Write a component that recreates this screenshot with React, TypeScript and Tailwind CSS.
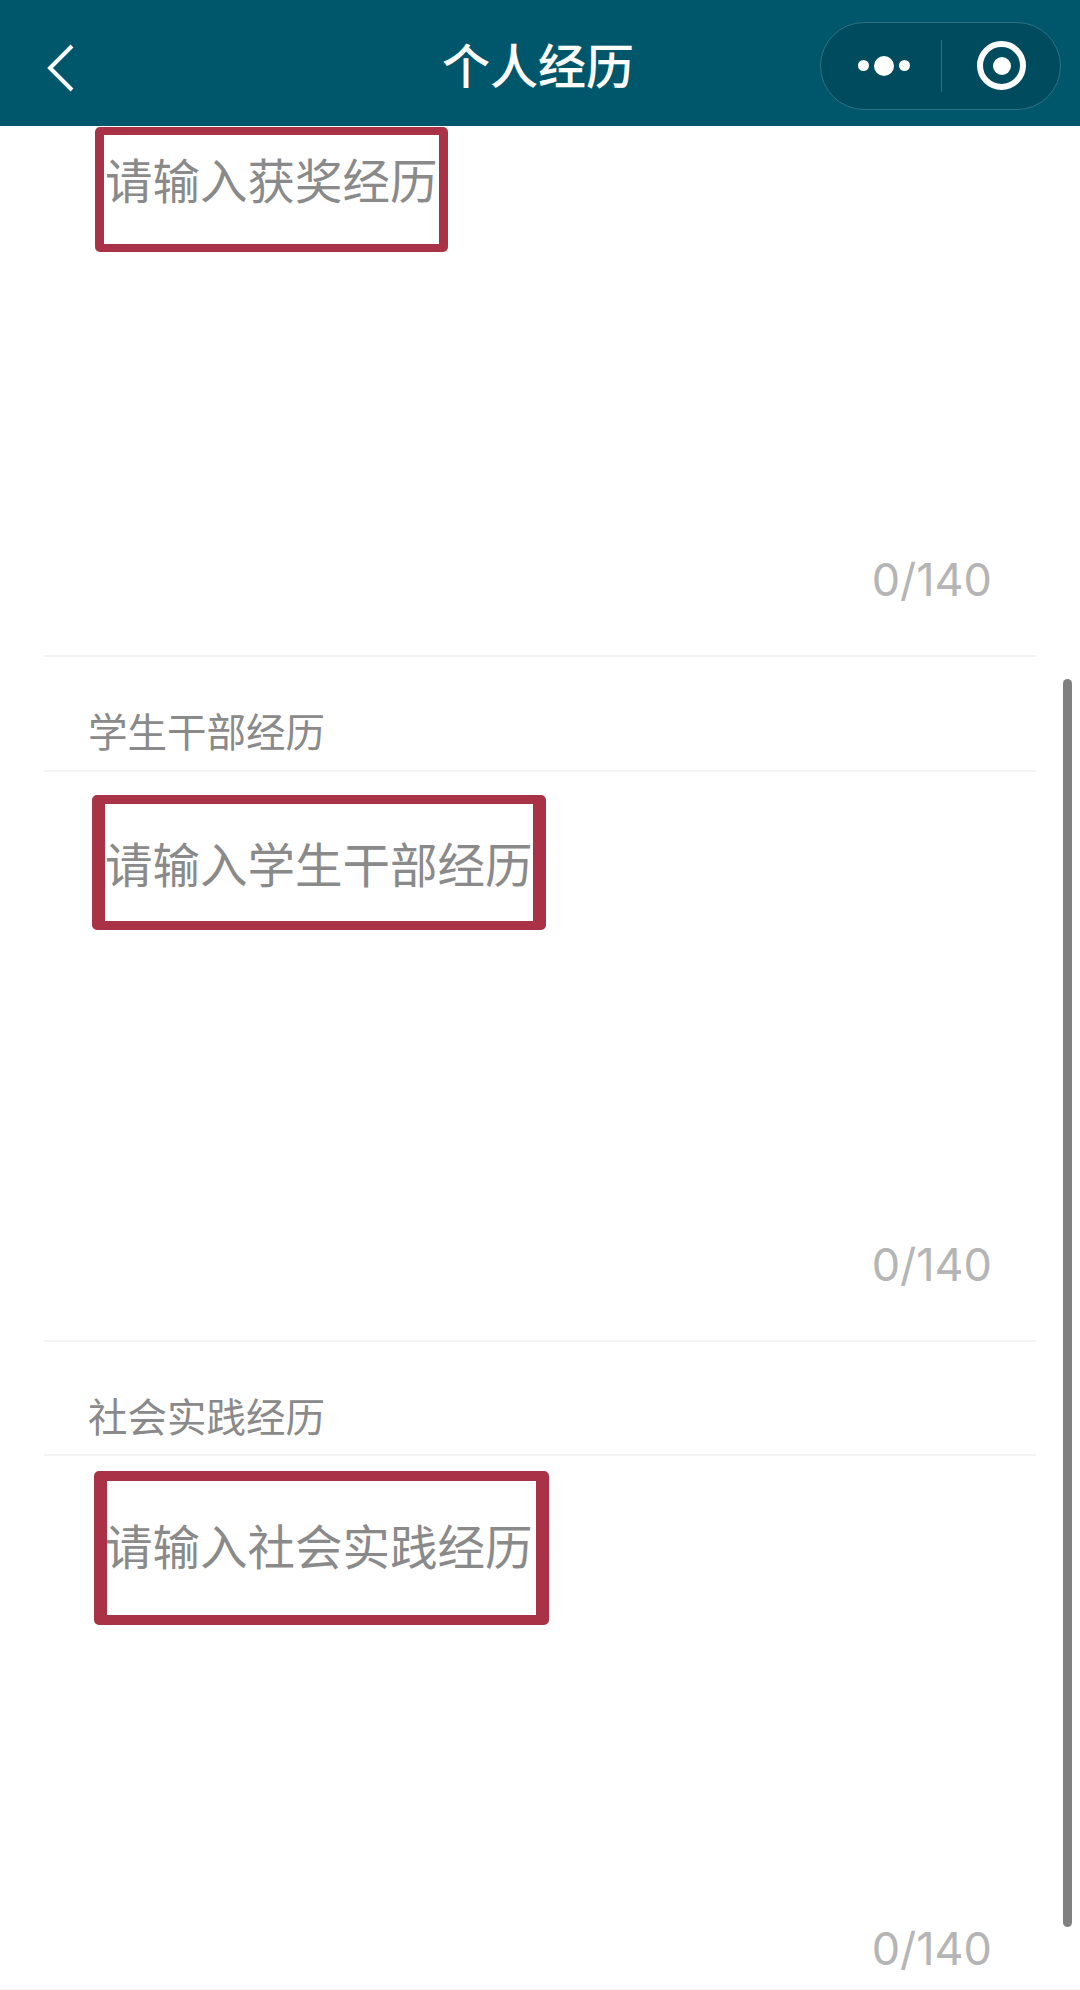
const font = "font-['Noto_Sans_CJK_SC','Noto_Sans',sans-serif]";

type SectionProps = {
  label?: string;
  placeholder: string;
  labelClass?: string;
  bodyClass: string;
  boxClass: string;
};

const Section = ({ label, placeholder, labelClass, bodyClass, boxClass }: SectionProps) => (
  <section>
    {label && (
      <div className={`border-b-[2px] border-[#f3f3f3] pl-[44px] text-[39.5px] leading-[50px] text-[#8a8a8a] ${labelClass}`}>
        {label}
      </div>
    )}
    <div className={`flex flex-col justify-between border-b-[2px] border-[#f3f3f3] pb-[48px] ${bodyClass}`}>
      <div className="pl-[61px]">
        <span className="relative inline-block text-[47.5px] leading-[54px] text-[#8a8a8a]">
          {placeholder}
          {/* red marker drawn over the screenshot */}
          <span className={`absolute rounded-[5px] border-solid border-[#a93246] ${boxClass}`} />
        </span>
      </div>
      <div className="pr-[44px] text-right font-['Inter',sans-serif] text-[45px] leading-[54px] text-[#b5b5b5]">
        0/140
      </div>
    </div>
  </section>
);

const App = () => {
  return (
    <div className={`relative h-[1990px] w-[1080px] overflow-hidden border-b border-[#f0f0f0] bg-white ${font}`}>
      <header className="flex h-[126px] items-center justify-between bg-[#00566a] pl-[46px] pr-[19px]">
        <svg width="30" height="50" viewBox="0 0 30 50" fill="none" className="mt-[10px] shrink-0">
          <path d="M26 3 L4 25 L26 47" stroke="#fff" strokeWidth="4" />
        </svg>
        <h1 className="ml-[180px] text-[48px] font-medium leading-none text-white">个人经历</h1>
        <div className="mt-[5px] flex h-[88px] w-[241px] items-center rounded-full border border-[#2c7383] bg-[#004b5e]">
          <div className="flex w-[120px] items-center justify-center gap-[5px] pl-[6px]">
            <span className="size-[11px] rounded-full bg-white" />
            <span className="size-[20px] rounded-full bg-white" />
            <span className="size-[11px] rounded-full bg-white" />
          </div>
          <div className="h-[52px] w-px bg-[#2c7383]" />
          <div className="flex flex-1 items-center justify-center pl-[2px]">
            <div className="flex size-[49px] items-center justify-center rounded-full border-[6px] border-white">
              <span className="size-[18px] rounded-full bg-white" />
            </div>
          </div>
        </div>
      </header>

      <main className="mx-[44px] w-[992px]">
        <Section
          placeholder="请输入获奖经历"
          bodyClass="h-[531px] pt-[26px]"
          boxClass="-top-[25px] -bottom-[46px] -left-[10px] -right-[10px] border-x-[9px] border-y-[8px]"
        />
        <Section
          label="学生干部经历"
          labelClass="h-[115px] pt-[48px]"
          placeholder="请输入学生干部经历"
          bodyClass="h-[570px] pt-[64px]"
          boxClass="-top-[41px] -bottom-[40px] -left-[13px] -right-[13px] border-x-[13px] border-y-[9px]"
        />
        <Section
          label="社会实践经历"
          labelClass="h-[114px] pt-[48px]"
          placeholder="请输入社会实践经历"
          bodyClass="h-[570px] pt-[62px]"
          boxClass="-top-[47px] -bottom-[53px] -left-[11px] -right-[16px] border-x-[13px] border-y-[10px]"
        />
      </main>

      {/* scrollbar thumb */}
      <div className="absolute left-[1063px] top-[679px] h-[1248px] w-[9px] rounded-full bg-[#808080]" />
    </div>
  );
};

export default App;
